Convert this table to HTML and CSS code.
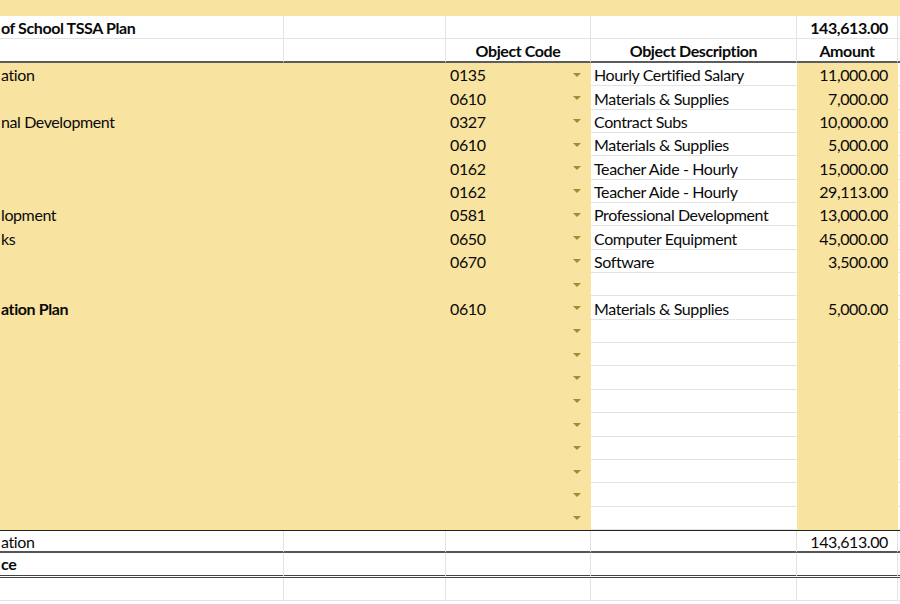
FILE: index.html
```html
<!DOCTYPE html>
<html>
<head>
<meta charset="utf-8">
<title>TSSA Plan</title>
<link rel="stylesheet" href="styles.css">
</head>
<body>
<div class="sheet">
  <div class="row top"><div class="c"></div><div class="c"></div><div class="c"></div><div class="c"></div><div class="c"></div><div class="c"></div></div>

  <div class="row hdr1">
    <div class="c a b">of School TSSA Plan</div><div class="c"></div><div class="c"></div><div class="c"></div><div class="c num b">143,613.00</div><div class="c"></div>
  </div>
  <div class="row hdr2">
    <div class="c"></div><div class="c"></div><div class="c ctr b">Object Code</div><div class="c ctr b">Object Description</div><div class="c ctr b">Amount</div><div class="c"></div>
  </div>

  <div class="row data"><div class="c y a">ation</div><div class="c y"></div><div class="c y code">0135<span class="dd"></span></div><div class="c w desc">Hourly Certified Salary</div><div class="c y num">11,000.00</div><div class="c w"></div></div>
  <div class="row data"><div class="c y a"></div><div class="c y"></div><div class="c y code">0610<span class="dd"></span></div><div class="c w desc">Materials &amp; Supplies</div><div class="c y num">7,000.00</div><div class="c w"></div></div>
  <div class="row data"><div class="c y a">nal Development</div><div class="c y"></div><div class="c y code">0327<span class="dd"></span></div><div class="c w desc">Contract Subs</div><div class="c y num">10,000.00</div><div class="c w"></div></div>
  <div class="row data"><div class="c y a"></div><div class="c y"></div><div class="c y code">0610<span class="dd"></span></div><div class="c w desc">Materials &amp; Supplies</div><div class="c y num">5,000.00</div><div class="c w"></div></div>
  <div class="row data"><div class="c y a"></div><div class="c y"></div><div class="c y code">0162<span class="dd"></span></div><div class="c w desc">Teacher Aide - Hourly</div><div class="c y num">15,000.00</div><div class="c w"></div></div>
  <div class="row data"><div class="c y a"></div><div class="c y"></div><div class="c y code">0162<span class="dd"></span></div><div class="c w desc">Teacher Aide - Hourly</div><div class="c y num">29,113.00</div><div class="c w"></div></div>
  <div class="row data"><div class="c y a">lopment</div><div class="c y"></div><div class="c y code">0581<span class="dd"></span></div><div class="c w desc">Professional Development</div><div class="c y num">13,000.00</div><div class="c w"></div></div>
  <div class="row data"><div class="c y a">ks</div><div class="c y"></div><div class="c y code">0650<span class="dd"></span></div><div class="c w desc">Computer Equipment</div><div class="c y num">45,000.00</div><div class="c w"></div></div>
  <div class="row data"><div class="c y a"></div><div class="c y"></div><div class="c y code">0670<span class="dd"></span></div><div class="c w desc">Software</div><div class="c y num">3,500.00</div><div class="c w"></div></div>
  <div class="row data"><div class="c y a"></div><div class="c y"></div><div class="c y code"><span class="dd"></span></div><div class="c w desc"></div><div class="c y num"></div><div class="c w"></div></div>
  <div class="row data"><div class="c y a b">ation Plan</div><div class="c y"></div><div class="c y code">0610<span class="dd"></span></div><div class="c w desc">Materials &amp; Supplies</div><div class="c y num">5,000.00</div><div class="c w"></div></div>
  <div class="row data"><div class="c y a"></div><div class="c y"></div><div class="c y code"><span class="dd"></span></div><div class="c w desc"></div><div class="c y num"></div><div class="c w"></div></div>
  <div class="row data"><div class="c y a"></div><div class="c y"></div><div class="c y code"><span class="dd"></span></div><div class="c w desc"></div><div class="c y num"></div><div class="c w"></div></div>
  <div class="row data"><div class="c y a"></div><div class="c y"></div><div class="c y code"><span class="dd"></span></div><div class="c w desc"></div><div class="c y num"></div><div class="c w"></div></div>
  <div class="row data"><div class="c y a"></div><div class="c y"></div><div class="c y code"><span class="dd"></span></div><div class="c w desc"></div><div class="c y num"></div><div class="c w"></div></div>
  <div class="row data"><div class="c y a"></div><div class="c y"></div><div class="c y code"><span class="dd"></span></div><div class="c w desc"></div><div class="c y num"></div><div class="c w"></div></div>
  <div class="row data"><div class="c y a"></div><div class="c y"></div><div class="c y code"><span class="dd"></span></div><div class="c w desc"></div><div class="c y num"></div><div class="c w"></div></div>
  <div class="row data"><div class="c y a"></div><div class="c y"></div><div class="c y code"><span class="dd"></span></div><div class="c w desc"></div><div class="c y num"></div><div class="c w"></div></div>
  <div class="row data"><div class="c y a"></div><div class="c y"></div><div class="c y code"><span class="dd"></span></div><div class="c w desc"></div><div class="c y num"></div><div class="c w"></div></div>
  <div class="row data"><div class="c y a"></div><div class="c y"></div><div class="c y code"><span class="dd"></span></div><div class="c w desc"></div><div class="c y num"></div><div class="c w"></div></div>

  <div class="row total">
    <div class="c a">ation</div><div class="c"></div><div class="c"></div><div class="c"></div><div class="c num">143,613.00</div><div class="c"></div>
  </div>
  <div class="row bal">
    <div class="c a b">ce</div><div class="c"></div><div class="c"></div><div class="c"></div><div class="c num"></div><div class="c"></div>
  </div>
  <div class="row last">
    <div class="c"></div><div class="c"></div><div class="c"></div><div class="c"></div><div class="c"></div><div class="c"></div>
  </div>
</div>
</body>
</html>
```
FILE: styles.css
```css
* { box-sizing: border-box; }
html, body { margin: 0; padding: 0; background: #fff; }
body {
  width: 900px;
  height: 604px;
  overflow: hidden;
  font-family: Lato, "Open Sans", sans-serif;
  font-size: 16px;
  letter-spacing: -0.4px;
  color: #0a0a0a;
}
.sheet { width: 900px; }
.row {
  display: grid;
  grid-template-columns: 284px 162px 145px 206px 101px 1fr;
}
.c {
  display: flex;
  align-items: center;
  white-space: nowrap;
  overflow: hidden;
  border-right: 1px solid #e3e3e3;
  border-bottom: 1px solid #e3e3e3;
  padding: 0 3px;
  min-width: 0;
}
.b { font-weight: 700; }
.a { padding-left: 1px; }
.ctr { justify-content: center; padding-top: 1px; }
.num { justify-content: flex-end; padding-right: 9px; }

.top .c { height: 16px; background: #f9e3a0; border-color: #f9e3a0; }
.hdr1 .c { height: 23px; padding-top: 1px; }
.hdr2 .c { height: 24px; border-bottom: 2px solid #5c5c5c; }

.data .c { height: 23.35px; padding-top: 1px; }
.data .y { background: #f9e3a0; border-color: transparent; }
.data .w { background: #fff; }
.data .desc { border-right-color: transparent; }
.code { padding-left: 4px; padding-right: 9px; }
.dd {
  margin-left: auto;
  width: 0; height: 0;
  border-left: 4px solid transparent;
  border-right: 4px solid transparent;
  border-top: 4px solid #a8892f;
}

.total { border-top: 1px solid #222; }
.total .c { height: 22px; padding-top: 2px; border-bottom: 2px solid #555; }
.bal .c { height: 25px; padding-top: 0; border-bottom: 3px double #444; }
.last .c { height: 23px; }
```
